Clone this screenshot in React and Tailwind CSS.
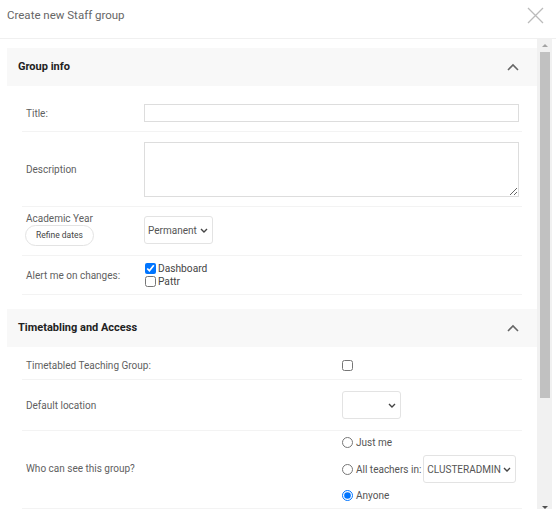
import { useState } from "react";

function ChevronUp() {
  return (
    <svg className="w-[12px] h-[8px] text-[#666]" viewBox="0 0 12 8" fill="none" stroke="currentColor" strokeWidth={1.6}>
      <path d="M1 7l5-5 5 5" />
    </svg>
  );
}

function Chevron() {
  return (
    <svg className="w-[8px] h-[5px] text-[#444] shrink-0" viewBox="0 0 8 5" fill="none" stroke="currentColor" strokeWidth={1.4}>
      <path d="M1 1l3 3 3-3" />
    </svg>
  );
}

function FakeSelect({ value, className }) {
  return (
    <div className={`flex items-center justify-between shrink-0 whitespace-nowrap h-[28px] bg-white border border-[#e3e3e3] rounded-[3px] pl-[3px] pr-[4px] text-[10px] text-[#555] ${className}`}>
      <span>{value}</span>
      <Chevron />
    </div>
  );
}

function SectionHeader({ title }) {
  return (
    <div className="flex items-center justify-between h-[38px] bg-[#f8f8f8] pl-[11px] pr-[18px]">
      <span className="text-[11px] font-bold text-[#222]">{title}</span>
      <ChevronUp />
    </div>
  );
}

export default function App() {
  const [dashboard, setDashboard] = useState(true);
  const [pattr, setPattr] = useState(false);
  const [visibility, setVisibility] = useState("anyone");

  return (
    <div className="w-[556px] h-[509px] bg-white flex flex-col overflow-hidden font-['Roboto',sans-serif]">
      {/* Cabecera */}
      <div className="flex items-center justify-between h-[39px] pb-[7px] border-b border-[#f0f0f0] pl-[7px] pr-[12px] shrink-0">
        <span className="text-[11.5px] text-[#666]">Create new Staff group</span>
        <svg className="w-[17px] h-[17px] text-[#bbb]" viewBox="0 0 17 17" fill="none" stroke="currentColor" strokeWidth={1.3}>
          <path d="M1 1l15 15M16 1L1 16" />
        </svg>
      </div>

      <div className="flex flex-1 min-h-0">
        <div className="w-[7px] shrink-0" />

        {/* Contenido */}
        <div className="w-[530px] shrink-0 pt-[9px]">
          <SectionHeader title="Group info" />

          <div className="px-[15px] pt-[9px]">
            {/* Title */}
            <div className="flex items-center py-[9px] border-b border-[#f3f3f3] pl-[4px] pr-[3px]">
              <label className="w-[118px] shrink-0 text-[10px] text-[#5f5f5f]">Title:</label>
              <input className="flex-1 h-[18px] border border-[#ddd] outline-none text-[10px] px-1" />
            </div>

            {/* Description */}
            <div className="flex items-center pt-[10px] pb-[9px] border-b border-[#f3f3f3] pl-[4px] pr-[3px]">
              <label className="w-[118px] shrink-0 text-[10px] text-[#5f5f5f]">Description</label>
              <textarea className="flex-1 h-[55px] border border-[#ddd] outline-none text-[10px] px-1 block" />
            </div>

            {/* Academic year */}
            <div className="flex items-center pt-[5px] pb-[9px] border-b border-[#f3f3f3] pl-[3px] pr-[3px]">
              <div className="w-[119px] shrink-0 flex flex-col items-start">
                <span className="text-[10px] text-[#5f5f5f] leading-[14px] pl-[1px]">Academic Year</span>
                <button className="mt-[-1px] h-[21px] px-[10px] rounded-full border border-[#e3e3e3] bg-white text-[8.5px] text-[#444]">
                  Refine dates
                </button>
              </div>
              <FakeSelect value="Permanent" className="w-[69px] mt-[2px]" />
            </div>

            {/* Alert */}
            <div className="flex items-center py-[6px] border-b border-[#f3f3f3] pl-[4px] pr-[3px]">
              <label className="w-[118px] shrink-0 text-[10px] text-[#5f5f5f]">Alert me on changes:</label>
              <div className="flex flex-col text-[10.2px] text-[#444] leading-[13px]">
                <label className="flex items-center gap-[2px]">
                  <input type="checkbox" checked={dashboard} onChange={(e) => setDashboard(e.target.checked)} className="m-0 ml-[1px] w-[11px] h-[11px] accent-[#0075ff]" />
                  Dashboard
                </label>
                <label className="flex items-center gap-[2px]">
                  <input type="checkbox" checked={pattr} onChange={(e) => setPattr(e.target.checked)} className="m-0 ml-[1px] w-[11px] h-[11px]" />
                  Pattr
                </label>
              </div>
            </div>
          </div>

          <div className="mt-[14px]">
            <SectionHeader title="Timetabling and Access" />
          </div>

          <div className="px-[15px]">
            {/* Timetabled */}
            <div className="flex items-center pt-[12px] pb-[7px] border-b border-[#f3f3f3] pl-[4px] pr-[3px]">
              <label className="w-[316px] shrink-0 text-[10px] text-[#5f5f5f] leading-[13px]">Timetabled Teaching Group:</label>
              <input type="checkbox" className="m-0 w-[11px] h-[11px]" />
            </div>

            {/* Default location */}
            <div className="flex items-center pt-[11px] pb-[11px] border-b border-[#f3f3f3] pl-[4px] pr-[3px]">
              <label className="w-[316px] shrink-0 text-[10px] text-[#5f5f5f]">Default location</label>
              <FakeSelect value="" className="w-[59px]" />
            </div>

            {/* Visibility */}
            <div className="flex items-center pt-[2px] pb-[4px] border-b border-[#f3f3f3] pl-[4px] pr-[3px]">
              <label className="w-[316px] shrink-0 text-[10px] text-[#5f5f5f]">Who can see this group?</label>
              <div className="flex flex-col text-[10px] text-[#555] whitespace-nowrap">
                <label className="flex items-center gap-[3px] h-[18px]">
                  <input type="radio" name="vis" checked={visibility === "me"} onChange={() => setVisibility("me")} className="m-0 w-[11px] h-[11px]" />
                  Just me
                </label>
                <label className="flex items-center gap-[2px] mt-[4px]">
                  <input type="radio" name="vis" checked={visibility === "all"} onChange={() => setVisibility("all")} className="m-0 mr-[1px] w-[11px] h-[11px]" />
                  All teachers in:
                  <FakeSelect value="CLUSTERADMIN" className="w-[93px]" />
                </label>
                <label className="flex items-center gap-[3px] h-[18px] mt-[3px]">
                  <input type="radio" name="vis" checked={visibility === "anyone"} onChange={() => setVisibility("anyone")} className="m-0 w-[11px] h-[11px] accent-[#0075ff]" />
                  Anyone
                </label>
              </div>
            </div>
          </div>
        </div>

        {/* Barra de desplazamiento */}
        <div className="w-[15px] shrink-0 bg-[#f1f1f1] flex flex-col items-center">
          <div className="h-[13px] flex items-center justify-center">
            <div className="w-0 h-0 border-l-[3px] border-r-[3px] border-b-[3px] border-l-transparent border-r-transparent border-b-[#a3a3a3]" />
          </div>
          <div className="w-[10px] h-[346px] bg-[#c1c1c1]" />
          <div className="flex-1" />
          <div className="h-[6px] flex items-end justify-center">
            <div className="w-0 h-0 border-l-[3px] border-r-[3px] border-t-[3px] border-l-transparent border-r-transparent border-t-[#505050]" />
          </div>
        </div>
      </div>
    </div>
  );
}
